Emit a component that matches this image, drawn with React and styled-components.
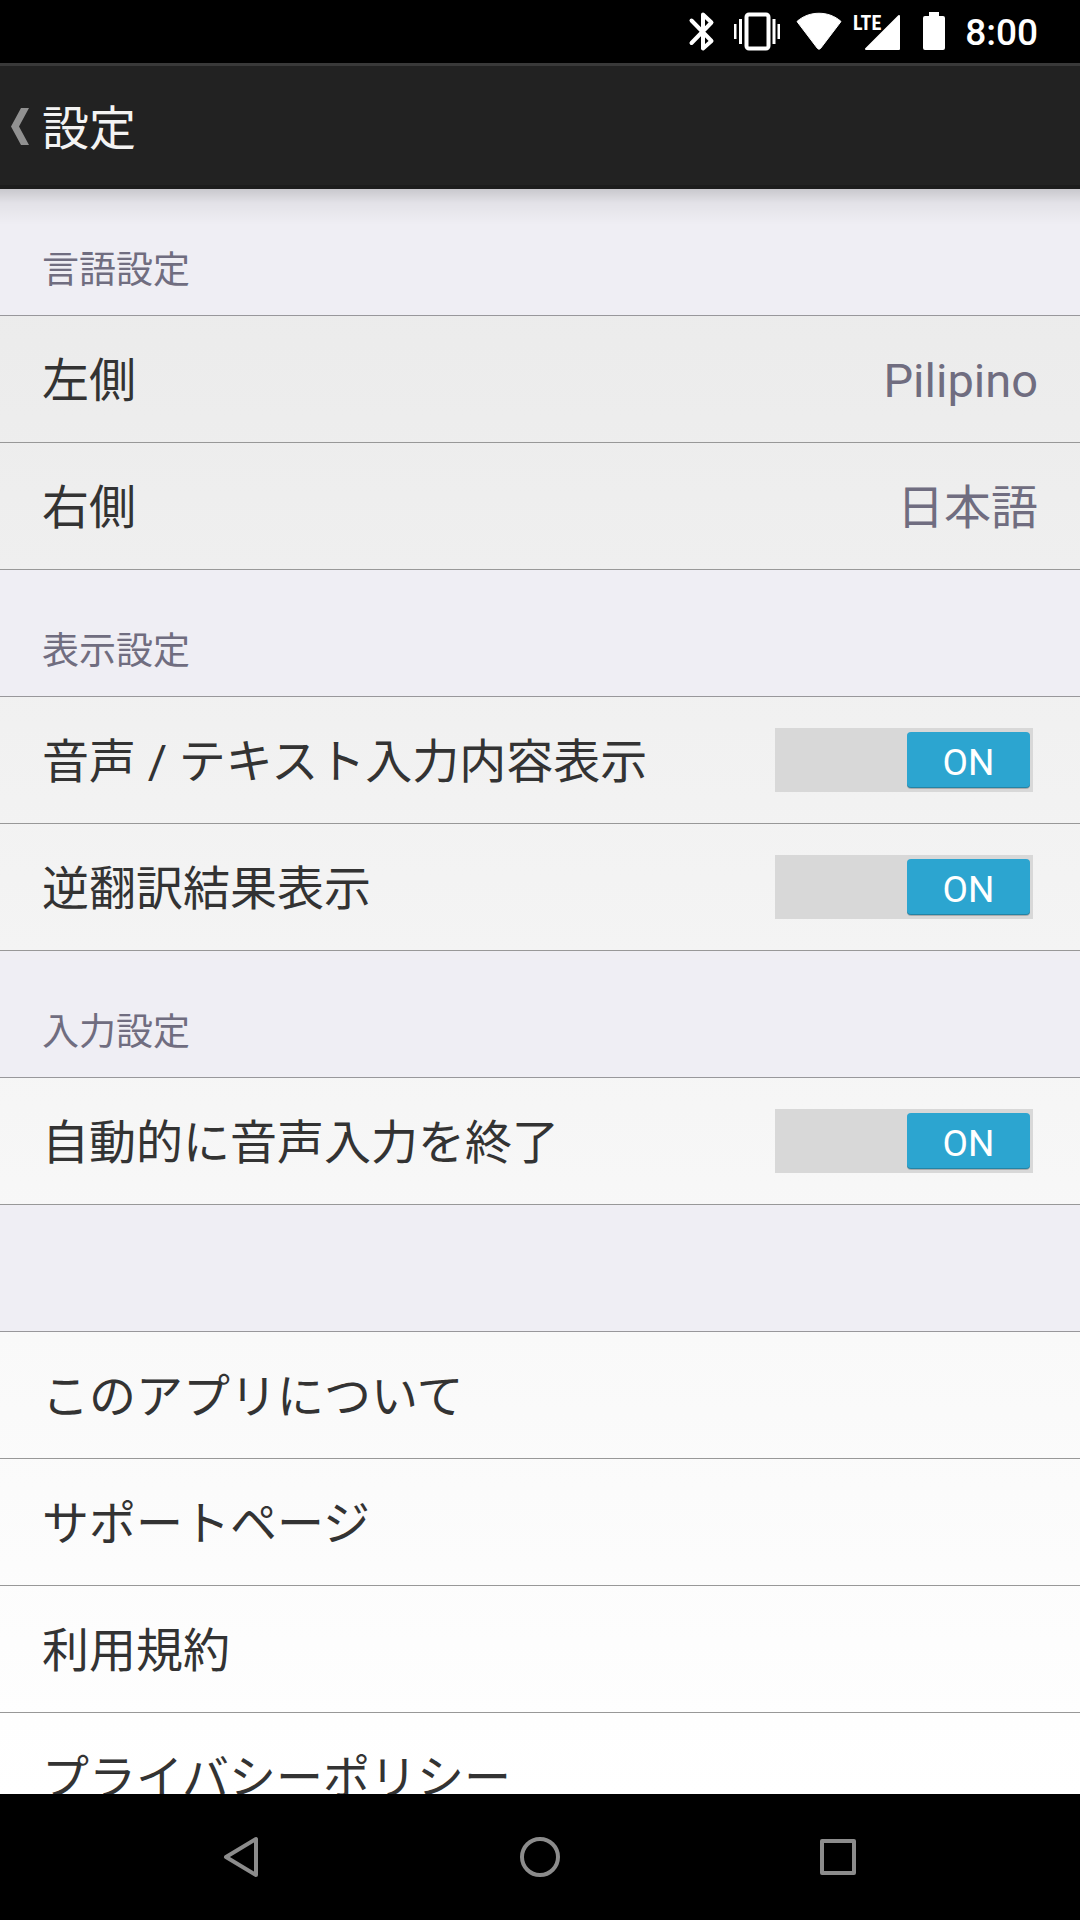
import { useState } from "react";
import styled, { createGlobalStyle } from "styled-components";

const GlobalStyle = createGlobalStyle`
  * {
    box-sizing: border-box;
  }
  body {
    margin: 0;
    background: #000;
    font-family: Roboto, "Noto Sans CJK JP", sans-serif;
  }
`

const Screen = styled.div`
  display: flex;
  flex-direction: column;
  height: 100vh;
`

const StatusBar = styled.div`
  display: flex;
  flex: none;
  align-items: center;
  justify-content: flex-end;
  height: 63px;
  padding-right: 42px;
  background: #000;
  color: #fff;
`

const Clock = styled.time`
  margin-left: 19px;
  padding-top: 3px;
  font-size: 37px;
  line-height: 44px;
  font-weight: 500;
`

const Header = styled.header`
  display: flex;
  flex: none;
  align-items: center;
  height: 126px;
  border-top: 3px solid #393939;
  border-bottom: 4px solid #1c1c1c;
  background: #222;
`

const BackButton = styled.button`
  display: flex;
  align-items: center;
  height: 100%;
  padding: 2px 13px 0 11px;
  border: 0;
  background: none;
`

const Title = styled.h1`
  margin: 0;
  padding-top: 6px;
  color: #f3f3f3;
  font-size: 47px;
  line-height: 64px;
  font-weight: 400;
`

const Content = styled.main`
  flex: 1;
  min-height: 0;
  overflow: hidden;
  background: linear-gradient(rgba(0, 0, 0, 0.16), rgba(0, 0, 0, 0.05) 14px, transparent 36px),
    linear-gradient(#efeef4, #efeef4) top / 100% 126px no-repeat,
    linear-gradient(#eaeaea, #fff);
`

const SectionTitle = styled.h2`
  display: flex;
  align-items: flex-end;
  height: 127px;
  margin: 0;
  padding: 0 42px 18px;
  border-bottom: 1px solid #98979b;
  background: ${props => props.$clear ? 'transparent' : '#efeef4'};
  color: #706d80;
  font-size: 37px;
  line-height: 52px;
  font-weight: 400;
`

const List = styled.ul`
  margin: 0;
  padding: 0;
  list-style: none;
`

const Row = styled.li`
  display: flex;
  height: 127px;
  border-bottom: 1px solid #989898;
  color: #333;
  font-size: 47px;
  line-height: 64px;

  & > * {
    display: flex;
    flex: 1;
    align-items: center;
    justify-content: space-between;
    padding: 0 42px;
    border: 0;
    background: none;
    color: inherit;
    font: inherit;
    text-align: left;
    text-decoration: none;
  }
`

const Text = styled.span`
  padding-top: 4px;
`

const Value = styled(Text)`
  color: #706d80;
`

const Track = styled.span`
  display: flex;
  justify-content: ${props => props.$on ? 'flex-end' : 'flex-start'};
  position: relative;
  width: 258px;
  height: 64px;
  margin-right: 5px;
  padding: 4px 3px;
  background: #d8d8d8;
`

const Checkbox = styled.input`
  position: absolute;
  inset: 0;
  width: 100%;
  height: 100%;
  margin: 0;
  opacity: 0;
`

const Thumb = styled.span`
  width: 123px;
  height: 56px;
  border-radius: 4px;
  background: ${props => props.$on ? '#2ca5d0' : '#999'};
  box-shadow: inset 0 -1px 0 rgba(0, 0, 0, 0.2), 0 1px 0 rgba(0, 0, 0, 0.2);
  color: #fff;
  font-size: 37px;
  line-height: 62px;
  text-align: center;
`

const NavBar = styled.nav`
  display: flex;
  flex: none;
  align-items: center;
  justify-content: center;
  gap: 170px;
  height: 126px;
  background: #000;
`

const NavButton = styled.button`
  display: grid;
  place-items: center;
  width: 128px;
  height: 126px;
  padding: 0;
  border: 0;
  background: none;
`

const StatusIcons = () => (
  <svg width="260" height="63" viewBox="686 0 260 63" fill="#fff" aria-hidden="true">
    <path d="M691.500 20.500l20 20.500-8.500 7.500V14.500l8.500 8-20 20.500" fill="none" stroke="#fff" strokeWidth="4" strokeLinejoin="round" strokeLinecap="round" />
    <rect x="746.500" y="14.500" width="22" height="34" rx="2.500" fill="none" stroke="#fff" strokeWidth="4" />
    <path d="M734 24h2.500v15H734zM739 19h3v25h-3zM772.500 19h3v25h-3zM777.500 24h2.500v15h-2.500z" />
    <path d="M797 21.500C809 10.500 829 10.500 841 21.500L820.500 48.500Q819 50 817.500 48.500Z" stroke="#fff" strokeWidth="1" strokeLinejoin="round" />
    <path d="M899 16v33h-33z" stroke="#fff" strokeWidth="2" strokeLinejoin="round" />
    <text x="853" y="30" fontFamily="'Roboto Condensed', 'Liberation Sans Narrow', 'Open Sans Condensed', Roboto, sans-serif" fontSize="20" fontWeight="700">LTE</text>
    <path d="M929 12h10v4h4q2 0 2 2v30q0 2-2 2h-18q-2 0-2-2V18q0-2 2-2h4z" />
  </svg>
)

const Switch = ({ label }) => {
  const [on, setOn] = useState(true)

  return (
    <label>
      <Text>{label}</Text>
      <Track $on={on}>
        <Checkbox type="checkbox" role="switch" checked={on} onChange={() => setOn(!on)} />
        <Thumb $on={on}>{on ? 'ON' : 'OFF'}</Thumb>
      </Track>
    </label>
  )
}

const languages = [
  { label: '左側', value: 'Pilipino' },
  { label: '右側', value: '日本語' },
]

const links = ['このアプリについて', 'サポートページ', '利用規約', 'プライバシーポリシー']

const App = () => {
  return (
    <Screen>
      <GlobalStyle />
      <StatusBar>
        <StatusIcons />
        <Clock>8:00</Clock>
      </StatusBar>
      <Header>
        <BackButton aria-label="戻る">
          <svg width="18" height="37" viewBox="0 0 18 37" fill="#919191">
            <path d="M10 0h8L8 18.500 18 37h-8L0 18.500z" />
          </svg>
        </BackButton>
        <Title>設定</Title>
      </Header>
      <Content>
        <SectionTitle $clear>言語設定</SectionTitle>
        <List>
          {languages.map(item => (
            <Row key={item.label}>
              <button type="button">
                <Text>{item.label}</Text>
                <Value>{item.value}</Value>
              </button>
            </Row>
          ))}
        </List>
        <SectionTitle>表示設定</SectionTitle>
        <List>
          <Row><Switch label="音声 / テキスト入力内容表示" /></Row>
          <Row><Switch label="逆翻訳結果表示" /></Row>
        </List>
        <SectionTitle>入力設定</SectionTitle>
        <List>
          <Row><Switch label="自動的に音声入力を終了" /></Row>
        </List>
        <SectionTitle as="div" />
        <List>
          {links.map(text => (
            <Row key={text}><a href="#"><Text>{text}</Text></a></Row>
          ))}
        </List>
      </Content>
      <NavBar>
        <NavButton aria-label="戻る">
          <svg width="44" height="44" viewBox="0 0 44 44" fill="none" stroke="#8c8c8c" strokeWidth="4" strokeLinejoin="round">
            <path d="M36 4v36L6 22z" />
          </svg>
        </NavButton>
        <NavButton aria-label="ホーム">
          <svg width="44" height="44" viewBox="0 0 44 44" fill="none" stroke="#8c8c8c" strokeWidth="4">
            <circle cx="22" cy="22" r="18" />
          </svg>
        </NavButton>
        <NavButton aria-label="履歴">
          <svg width="44" height="44" viewBox="0 0 44 44" fill="none" stroke="#8c8c8c" strokeWidth="4" strokeLinejoin="round">
            <rect x="6" y="6" width="32" height="32" />
          </svg>
        </NavButton>
      </NavBar>
    </Screen>
  )
}

export default App
